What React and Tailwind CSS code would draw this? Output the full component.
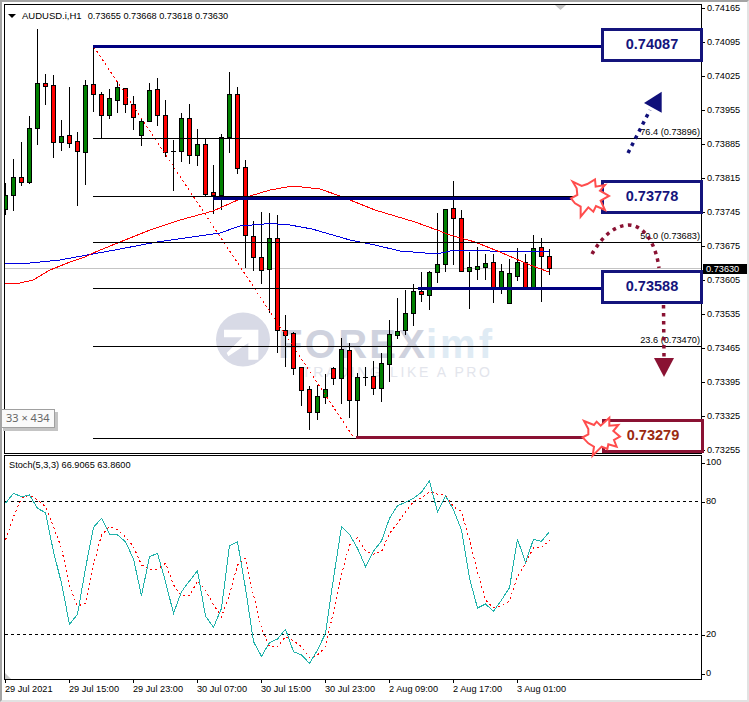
// AUDUSD H1 terminal chart with hand-drawn levels
const FONT = "font-['Liberation_Sans',Arial,sans-serif]";

// [top of body, bottom of body, wick top, wick bottom, up?]
const candles = [
  [195, 209, 183, 215, 1], [177, 195, 159, 211, 1], [177, 182, 142, 186, 0], [128, 182, 116, 184, 1],
  [83, 128, 29, 145, 1], [83, 86, 74, 105, 0], [85, 142, 75, 158, 0], [136, 142, 120, 151, 1],
  [135, 143, 87, 148, 0], [141, 151, 132, 206, 0], [85, 152, 80, 185, 1], [84, 94, 47, 112, 0],
  [94, 115, 92, 138, 0], [98, 115, 89, 119, 1], [87, 100, 81, 113, 1], [88, 104, 88, 113, 0],
  [104, 117, 96, 130, 0], [121, 135, 118, 146, 1], [90, 121, 83, 122, 1], [89, 115, 78, 126, 0],
  [115, 152, 100, 157, 0], [151, 151, 140, 191, 1], [118, 151, 113, 162, 1], [118, 155, 104, 164, 0],
  [144, 155, 129, 166, 1], [144, 194, 138, 197, 0], [192, 195, 165, 214, 0], [137, 195, 134, 210, 1],
  [94, 137, 72, 153, 1], [94, 168, 87, 174, 0], [167, 235, 160, 268, 0], [236, 257, 221, 271, 0],
  [257, 270, 212, 284, 0], [238, 269, 213, 313, 1], [238, 330, 215, 353, 0], [330, 335, 315, 367, 0],
  [333, 368, 332, 375, 0], [367, 390, 367, 406, 0], [389, 412, 386, 430, 0], [396, 412, 385, 420, 1],
  [389, 397, 374, 404, 1], [368, 378, 367, 385, 0], [349, 378, 338, 404, 1], [350, 400, 343, 418, 0],
  [377, 400, 373, 438, 1], [377, 377, 367, 386, 1], [376, 388, 361, 395, 0], [363, 388, 353, 402, 1],
  [334, 364, 320, 382, 1], [331, 335, 298, 339, 1], [313, 330, 290, 335, 1], [291, 313, 284, 326, 1],
  [291, 294, 272, 302, 0], [272, 295, 271, 310, 1], [264, 272, 213, 283, 1], [209, 264, 209, 272, 1],
  [208, 218, 181, 265, 0], [218, 271, 210, 272, 0], [267, 271, 252, 309, 1], [266, 269, 247, 280, 1],
  [263, 267, 254, 280, 1], [262, 289, 254, 303, 0], [271, 289, 264, 294, 1], [273, 303, 259, 303, 1],
  [262, 276, 248, 281, 1], [262, 289, 254, 289, 0], [248, 287, 235, 287, 1], [247, 256, 238, 302, 0],
  [256, 268, 249, 275, 0],
];

const redMa = '5,283 20,283 33,280 50,270 70,262 85,257 93,253 120,242 150,230 180,220 213,211 240,199 270,190 293,186 320,189 340,196 375,210 415,222 437,230 450,235 475,242 500,252 530,265 549,272';
const blueMa = '5,264 25,263.5 60,260 93,254 120,249 157,242 220,233 240,226 270,223.5 290,225 312,229 350,240 375,245 400,251 425,253 437,254 450,251 480,250 500,252 520,251 549,251';

const mainY = [145, 115, 125, 120, 160, 173, 290, 385, 508, 478, 340, 217, 190, 238, 240, 260, 312, 422, 305, 295, 380, 475, 410, 378, 347, 483, 517, 460, 272, 260, 400, 560, 604, 563, 552, 523, 590, 600, 625, 585, 535, 370, 215, 238, 280, 335, 288, 258, 190, 152, 142, 130, 112, 77, 172, 122, 165, 225, 370, 459, 447, 469, 435, 398, 253, 322, 253, 259, 230];
const signalY = [255, 185, 130, 120, 135, 155, 215, 280, 395, 453, 445, 330, 240, 215, 225, 245, 275, 330, 343, 343, 325, 390, 422, 422, 378, 405, 450, 485, 420, 330, 310, 420, 520, 575, 575, 545, 557, 575, 608, 600, 575, 470, 360, 270, 248, 288, 298, 290, 235, 205, 170, 140, 128, 110, 118, 120, 155, 170, 255, 350, 435, 458, 452, 438, 365, 325, 278, 278, 255];
const toPoints = (ys) => ys.map((y, i) => `${5.5 + 8 * i},${(455 + y / 3).toFixed(1)}`).join(' ');

const prices = ['0.74165', '0.74095', '0.74025', '0.73955', '0.73885', '0.73815', '0.73745', '0.73675', '0.73605', '0.73535', '0.73465', '0.73395', '0.73325', '0.73255'];
const times = ['29 Jul 2021', '29 Jul 15:00', '29 Jul 23:00', '30 Jul 07:00', '30 Jul 15:00', '30 Jul 23:00', '2 Aug 09:00', '2 Aug 17:00', '3 Aug 01:00'];

const fibs = [
  { y: 138.5, label: '76.4 (0.73896)' },
  { y: 196.5 },
  { y: 242.5, label: '50.0 (0.73683)' },
  { y: 288.5 },
  { y: 346.5, label: '23.6 (0.73470)' },
  { y: 438.5 },
];

const boxes = [
  { text: '0.74087', top: 'top-[28px]', left: 'left-[601px]', cls: 'border-[#14147c] text-[#14147c]' },
  { text: '0.73778', top: 'top-[180px]', left: 'left-[601px]', cls: 'border-[#14147c] text-[#14147c]' },
  { text: '0.73588', top: 'top-[270px]', left: 'left-[601px]', cls: 'border-[#14147c] text-[#14147c]' },
  { text: '0.73279', top: 'top-[419px]', left: 'left-[602px]', cls: 'border-[#8a1233] text-[#9a2a12]' },
];

function Candle({ c, i }) {
  const [top, bot, hi, lo, up] = c;
  const x = 5.5 + 8 * i;
  return (
    <g shapeRendering="crispEdges">
      <line x1={x} x2={x} y1={hi} y2={lo} stroke="#000" />
      {top === bot
        ? <line x1={x - 2.5} x2={x + 2.5} y1={top + 0.5} y2={top + 0.5} stroke="#000" />
        : <rect x={x - 2} y={top + 0.5} width={4} height={bot - top} fill={up ? '#008000' : '#ff0000'} stroke="#000" />}
    </g>
  );
}

function PriceChart() {
  return (
    <svg viewBox="5 5 696 448" className="block w-[696px] h-[448px]">
      {/* watermark */}
      <g>
        <circle cx="243" cy="339.5" r="27" fill="#d8dae6" />
        <path transform="translate(210 308) scale(0.3333)" d="M42,65 H145 V155 H115 V105 L55,145 L50,135 L97,88 H42 Z" fill="#fff" />
        <text x="278" y="358" textLength="147" fontFamily="'Liberation Sans',Arial,sans-serif" fontWeight="700" fontSize="40" fill="#cfd2de">FOREX</text>
        <text x="426" y="358" textLength="66" fontFamily="'Liberation Sans',Arial,sans-serif" fontWeight="700" fontSize="40" fill="#dfebf4">imf</text>
        <text x="302" y="377" textLength="188" fontFamily="'Liberation Sans',Arial,sans-serif" fontSize="14" fill="#e3e5ec">TRADING LIKE A PRO</text>
      </g>
      <line x1="5" x2="701" y1="268.5" y2="268.5" stroke="#c4c4c4" />
      {candles.map((c, i) => <Candle key={i} c={c} i={i} />)}
      <g shapeRendering="crispEdges">
        <polyline points={blueMa} fill="none" stroke="#0000e0" />
        <polyline points={redMa} fill="none" stroke="#ff0000" />
        <line x1="94" y1="47" x2="354" y2="438" stroke="#ff0000" strokeDasharray="2 3" />
        {fibs.map((f) => <line key={f.y} x1="93" x2="701" y1={f.y} y2={f.y} stroke="#000" />)}
        <rect x="93" y="45" width="510" height="3" fill="#000080" />
        <rect x="213" y="197" width="380" height="3" fill="#000080" />
        <rect x="418" y="287" width="185" height="3" fill="#000080" />
        <rect x="356" y="436" width="240" height="3" fill="#8a1233" />
      </g>
      {fibs.filter((f) => f.label).map((f) => (
        <text key={f.y} x="700" y={f.y - 3.5} textAnchor="end" fontFamily="'Liberation Sans',Arial,sans-serif" fontSize="9.2" fill="#000">{f.label}</text>
      ))}
      <path d="M555 5 H566 L560.5 10 Z" fill="#c4c4c4" />
    </svg>
  );
}

function StochChart() {
  return (
    <svg viewBox="5 456 696 223" className="block w-[696px] h-[223px]">
      <g shapeRendering="crispEdges">
        <line x1="5" x2="701" y1="501.5" y2="501.5" stroke="#000" strokeDasharray="3 3" />
        <line x1="5" x2="701" y1="634.5" y2="634.5" stroke="#000" strokeDasharray="3 3" />
        <polyline points={toPoints(signalY)} fill="none" stroke="#ff0000" strokeDasharray="2 3" />
        <polyline points={toPoints(mainY)} fill="none" stroke="#20b2aa" />
      </g>
      <path d="M5 673 L11 679 H5 Z" fill="#c8c8c8" />
    </svg>
  );
}

function Overlay() {
  return (
    <svg viewBox="0 0 749 702" className="absolute left-0 top-0 w-[749px] h-[702px] pointer-events-none">
      {/* target up */}
      <line x1="628" y1="153" x2="650" y2="110" stroke="#10107a" strokeWidth="3.5" strokeDasharray="3.5 4.5" />
      <path d="M661.7 91.7 L644 103 L661.7 112.7 Z" fill="#10107a" />
      {/* target down */}
      <path d="M592 254 C600 240 612 226 628 225 C645 225 656 245 659 268" fill="none" stroke="#8a1233" strokeWidth="3.5" strokeDasharray="3.5 4.5" />
      <line x1="663.5" y1="305" x2="664" y2="358" stroke="#8a1233" strokeWidth="3.5" strokeDasharray="3.5 4.5" />
      <path d="M654 358 H674 L664 377 Z" fill="#8a1233" />
      {/* bursts */}
      <polygon
        transform="translate(560 170) scale(0.3333)"
        points="38,35 65,48 82,42 105,28 107,50 135,45 120,62 147,78 122,92 135,120 108,108 100,125 85,112 62,140 62,110 45,100 33,85 52,75 50,55"
        fill="#fff" stroke="#ff4d4d" strokeWidth="6"
      />
      <polygon
        transform="translate(570 405) scale(0.3333)"
        points="42,48 72,60 80,50 92,62 118,38 118,62 145,60 130,78 150,95 132,105 140,125 115,118 112,132 95,125 68,152 72,125 55,115 38,97 55,88 55,72"
        fill="#fff" stroke="#ff4d4d" strokeWidth="6"
      />
    </svg>
  );
}

export default function App() {
  return (
    <div className={`relative w-[749px] h-[702px] overflow-hidden bg-white box-border border-t-2 border-l-2 border-t-[#a4a4a4] border-l-[#a4a4a4] border-r-2 border-b-2 border-r-[#e2e2e2] border-b-[#e2e2e2] pl-[2px] pt-[2px] text-black ${FONT}`}>
      {/* main chart row */}
      <div className="flex h-[450px]">
        <div className="relative w-[698px] h-[450px] border border-black">
          <PriceChart />
          <div className="absolute left-[3px] top-[5px] flex items-center gap-[6px] text-[9.5px] leading-[12px] whitespace-nowrap">
            <span className="w-0 h-0 border-x-[4px] border-x-transparent border-t-[4px] border-t-black" />
            <span className="flex gap-[6px] bg-white">
              <span>AUDUSD.i,H1</span>
              <span className="text-[9.2px]">0.73655 0.73668 0.73618 0.73630</span>
            </span>
          </div>
        </div>
        <div className="flex flex-col gap-[24px] -mt-[1px] text-[9.2px]">
          {prices.map((p) => (
            <div key={p} className="flex items-center h-[10px] gap-[2px]">
              <span className="w-[3px] h-px bg-black" />
              <span className="leading-[10px]">{p}</span>
            </div>
          ))}
        </div>
      </div>

      {/* stochastic row */}
      <div className="flex h-[225px] mt-px">
        <div className="relative w-[698px] h-[225px] border border-black">
          <StochChart />
          <span className="absolute left-[4px] top-[3px] text-[9.2px] leading-[12px] whitespace-nowrap">Stoch(5,3,3) 66.9065 63.8600</span>
        </div>
        <div className="relative flex-1 text-[9.2px]">
          {/* scale ticks sit on the dashed levels */}
          <div className="flex flex-col">
            <div className="flex items-center h-[10px] gap-[1px] mt-[3px]"><span className="w-[3px] h-px bg-black" />100</div>
            <div className="flex items-center h-[10px] gap-[1px] mt-[29px]"><span className="w-[3px] h-px bg-black" />80</div>
            <div className="flex items-center h-[10px] gap-[1px] mt-[123px]"><span className="w-[3px] h-px bg-black" />20</div>
            <div className="flex items-center h-[10px] gap-[1px] mt-[29px]"><span className="w-[3px] h-px bg-black" />0</div>
          </div>
        </div>
      </div>

      {/* time axis */}
      <div className="grid grid-cols-[repeat(9,64px)] text-[9.2px] pl-px">
        {times.map((t) => (
          <div key={t} className="flex flex-col h-[16px]">
            <span className="w-px h-[3px] bg-black" />
            <span className="whitespace-nowrap leading-[12px]">{t}</span>
          </div>
        ))}
      </div>

      {/* drawn level boxes */}
      {boxes.map((b) => (
        <div key={b.text} className={`absolute -mt-[2px] -ml-[2px] ${b.top} ${b.left} w-[102px] h-[34px] flex items-center justify-center bg-white border-[3px] font-bold text-[14.5px] ${b.cls}`}>
          {b.text}
        </div>
      ))}

      <div className="absolute -mt-[2px] -ml-[2px] top-[264px] left-[703px] w-[46px] h-[10px] bg-black text-white text-[9.2px] leading-[10px] pl-[3px]">0.73630</div>

      <div className="absolute -mt-[2px] -ml-[2px] left-0 top-[409px] w-[55px] h-[19px] flex items-center pl-[5px] bg-[#fafafa] border border-[#a0a0a0] shadow-[3px_3px_0_#c4c4c4] text-[#666] text-[11px] font-['Noto_Sans',sans-serif]">33 × 434</div>

      <div className="absolute -mt-[2px] -ml-[2px] left-0 top-0"><Overlay /></div>
    </div>
  );
}
